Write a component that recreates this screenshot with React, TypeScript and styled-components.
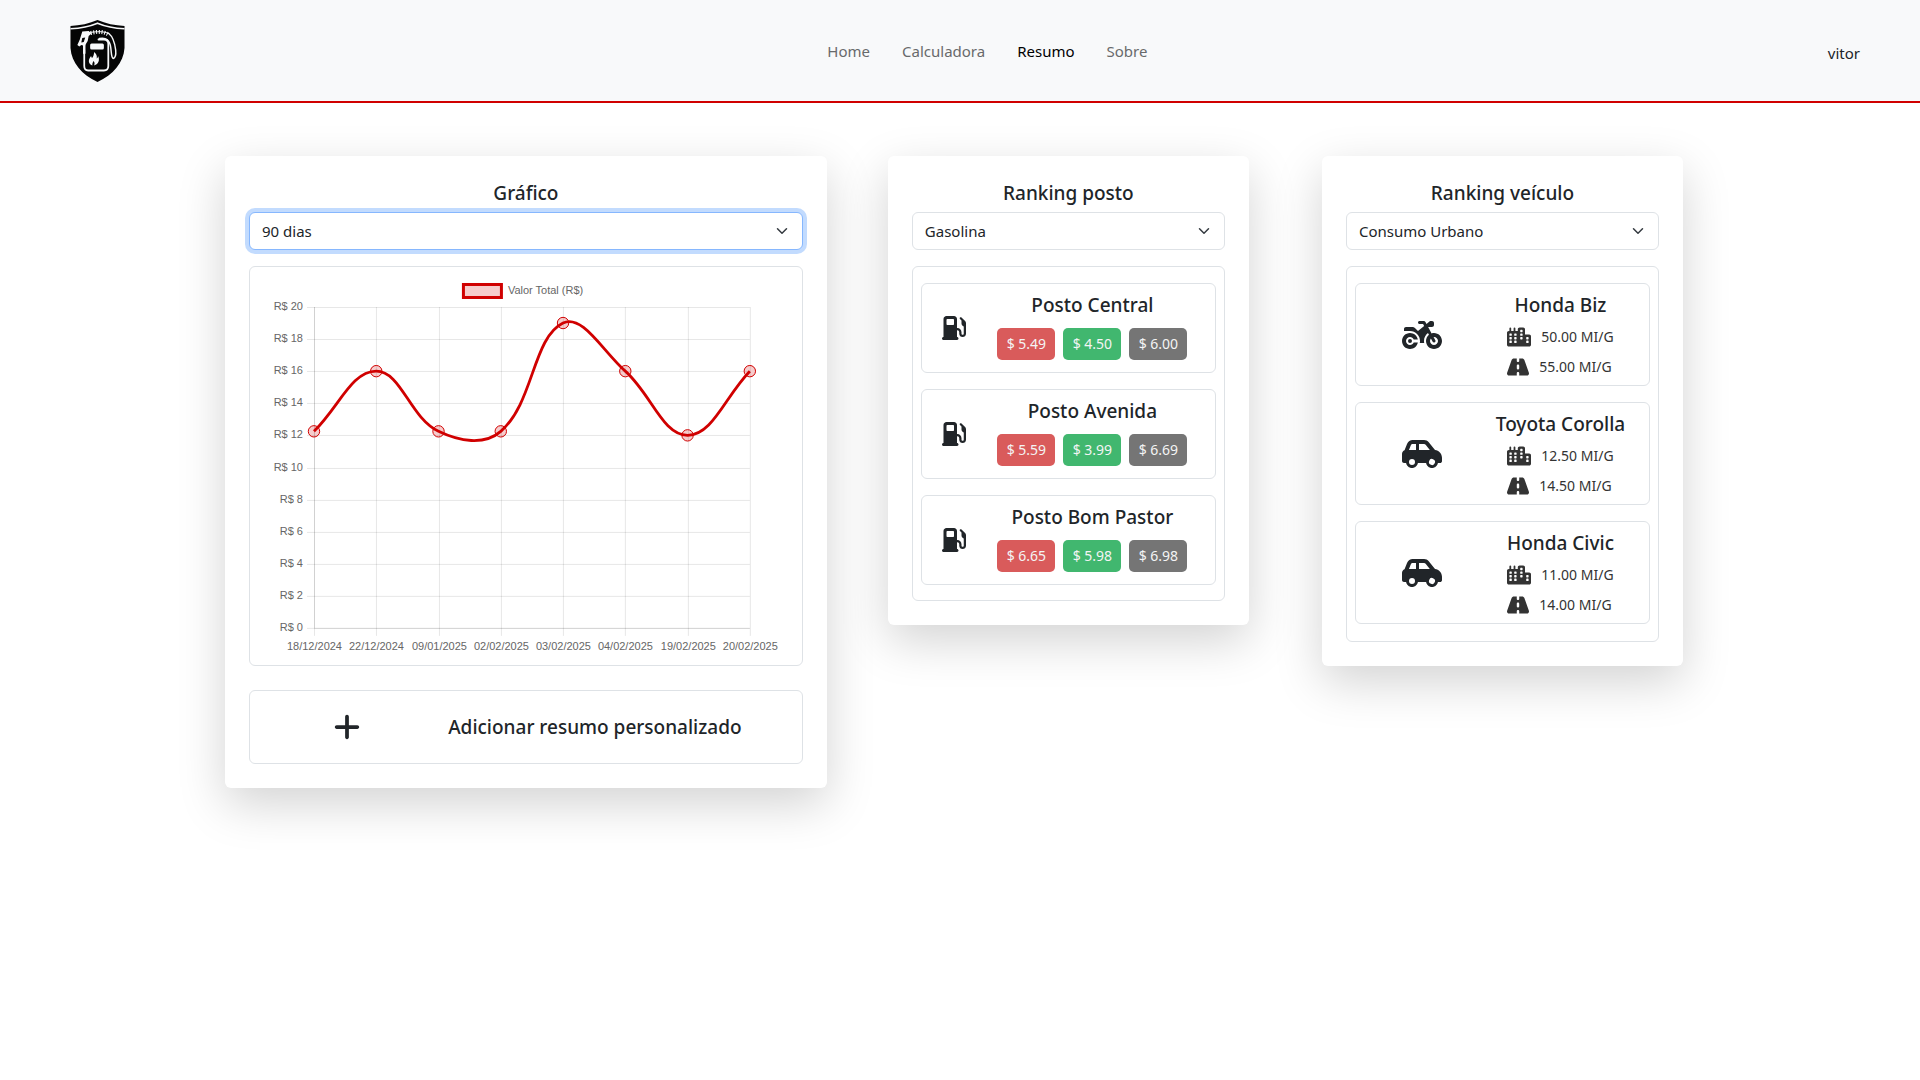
import React, { useState } from 'react';
import styled, { createGlobalStyle, css } from 'styled-components';
import { FaCarSide, FaCity, FaGasPump, FaMotorcycle, FaPlus, FaRoad } from 'react-icons/fa6';

const GlobalStyle = createGlobalStyle`
  *, *::before, *::after { box-sizing: border-box; }
  body {
    margin: 0;
    background: #fff;
    color: #212529;
    font-family: "Noto Sans", "Open Sans", sans-serif;
    font-size: 15px;
    line-height: 24px;
  }
`;

const Header = styled.header`
  display: flex;
  align-items: center;
  justify-content: space-between;
  height: 103px;
  padding: 0 60px 0 48px;
  background: #f8f9fa;
  border-bottom: 2px solid #d00000;
`;

const Brand = styled.a`
  display: flex;
  justify-content: center;
  width: 99px;
`;

const Nav = styled.nav`
  display: flex;
`;

const NavLink = styled.a<{ $active?: boolean }>`
  padding: 8px 16px;
  color: ${(p) => (p.$active ? '#000' : '#686a6b')};
  text-decoration: none;
`;

const UserLink = styled.a`
  padding-top: 4px;
  color: inherit;
  text-decoration: none;
`;

const Board = styled.main`
  display: grid;
  grid-template-columns: minmax(0, 5fr) 61px minmax(0, 3fr) 73px minmax(0, 3fr);
  align-items: start;
  padding: 53px 237px 80px 225px;
`;

const Card = styled.section<{ $column: number }>`
  grid-column: ${(p) => p.$column};
  padding: 24px;
  background: #fff;
  border-radius: 6px;
  box-shadow: 0 16px 48px rgba(0, 0, 0, 0.175);
`;

const heading = css`
  font-size: 19px;
  font-weight: 500;
  line-height: 26px;
  text-align: center;
`;

const CardTitle = styled.label`
  ${heading}
  display: block;
  margin-bottom: 6px;
`;

const SelectBox = styled.div`
  display: grid;
  align-items: center;
  margin-bottom: 16px;

  > * { grid-area: 1 / 1; }

  svg {
    justify-self: end;
    margin-right: 13px;
    pointer-events: none;
  }
`;

const Select = styled.select<{ $focused?: boolean }>`
  appearance: none;
  width: 100%;
  height: 38px;
  padding: 0 36px 0 12px;
  border: 1px solid ${(p) => (p.$focused ? '#86b7fe' : '#dee2e6')};
  border-radius: 6px;
  outline: 0;
  background: #fff;
  box-shadow: ${(p) => (p.$focused ? '0 0 0 4px rgba(13, 110, 253, 0.25)' : 'none')};
  color: #212529;
  font: inherit;
`;

const Panel = styled.div`
  border: 1px solid #dee2e6;
  border-radius: 6px;
`;

const Chart = styled.svg`
  display: block;
  width: 100%;
  font-family: "Liberation Sans", Arial, sans-serif;
  font-size: 11px;
  fill: #666;
`;

const AddButton = styled.button`
  ${heading}
  display: grid;
  grid-template-columns: 194fr 302fr;
  align-items: center;
  justify-items: center;
  width: 100%;
  height: 74px;
  margin-top: 24px;
  padding: 1px 56px 0 0;
  border: 1px solid #dee2e6;
  border-radius: 6px;
  background: #fff;
  color: inherit;
  font-family: inherit;
  cursor: pointer;
`;

const List = styled.ul<{ $bottom: number }>`
  display: flex;
  flex-direction: column;
  gap: 16px;
  margin: 0;
  padding: 16px 8px ${(p) => p.$bottom}px;
  border: 1px solid #dee2e6;
  border-radius: 6px;
  list-style: none;
`;

const Item = styled.li<{ $columns: string; $height: number }>`
  display: grid;
  grid-template-columns: ${(p) => p.$columns};
  align-items: center;
  justify-items: center;
  min-height: ${(p) => p.$height}px;
  padding-right: 16px;
  border: 1px solid #dee2e6;
  border-radius: 6px;
`;

const ItemIcon = styled.span<{ $width: number; $height: number }>`
  display: flex;
  flex: none;

  svg {
    flex: none;
    width: ${(p) => p.$width}px;
    height: ${(p) => p.$height}px;
  }
`;

const Details = styled.div`
  display: flex;
  flex-direction: column;
  align-items: center;
  align-self: start;
  padding-top: 8px;
`;

const ItemTitle = styled.h2`
  ${heading}
  margin: 0;
  white-space: nowrap;
`;

const Prices = styled.div`
  display: flex;
  gap: 8px;
  margin-top: 10px;
`;

const Price = styled.span<{ $color: string }>`
  min-width: 58px;
  border-radius: 5px;
  background: ${(p) => p.$color};
  color: #f4f4f4;
  font-size: 14px;
  line-height: 32px;
  text-align: center;
`;

const Stats = styled.div`
  display: flex;
  flex-direction: column;
  gap: 5px;
  margin-top: 6px;
`;

const Stat = styled.span`
  display: flex;
  align-items: center;
  gap: 10px;
  color: #333;
  font-size: 14px;
  line-height: 25px;
  white-space: nowrap;
`;

function Logo() {
  return (
    <svg width="55" height="62" viewBox="0 0 56 62" preserveAspectRatio="none" role="img" aria-label="Logo">
      <path d="M.5 6C10 5.500 20 3.500 28 0c8 3.500 18 5.500 27.500 6v22C54.500 43 44 54.500 28 62 12 54.500 1.500 43 .5 28Z" fill="#050505" />
      <path d="M.5 8.800C11 8.300 20 6.500 28 3.200c8 3.300 17 5.100 27.500 5.600" fill="none" stroke="#f8f9fa" strokeWidth="1.600" />
      <g fill="none" stroke="#f8f9fa" strokeLinecap="round">
        <path d="M14.500 30v16c0 3 1.500 4.500 4 4.500h16c3 0 4.500-1.500 4.500-4.500V24c0-3-1.500-4.500-4.500-4.500H29" strokeWidth="1.800" />
        <path d="M14.500 33v-8" strokeWidth="2.500" />
        <path d="M30 18.500c7-1.500 10.500 2 11.500 9 .8 6 .5 10.500 2.500 11 2-.5 3-3.500 2.500-8.500C45.500 22 44 17 39.500 13.500" strokeWidth="1.500" />
        <path d="M21 13c6-1.500 13-2 19 2" strokeWidth="4" strokeDasharray="1.100 1.700" strokeLinecap="butt" />
        <path d="M20 12.500c7-1 14-1.500 19.500 1" strokeWidth="1" />
      </g>
      <path d="M12.500 11.500 19 11l3 2.500-3 2.500-1 5-3 5-3.500-1-2 1.500-2-1.500 2.500-5.500Z" fill="#f8f9fa" />
      <path d="m12.500 18 3-.5-1.500 4.500-2.500.5Z" fill="#050505" />
      <rect x="20.500" y="23.500" width="14" height="6" rx="1.500" fill="#f8f9fa" />
      <path d="M24.500 32c2.500 2 3.200 4 2.700 6.500 1-.4 1.300-1.300 1.300-2.500 2 3.500 1 8-4 9.500.8-1.600.7-3-.5-4.500-.8 1.600-1.500 2.400-1.200 4.500-4.800-2-4.300-6-1.300-9.500.2 1 .4 1.600 1 2 1.400-1.700 2-3.500 2-6Z" fill="#f8f9fa" />
    </svg>
  );
}

function Chevron() {
  return (
    <svg width="16" height="12" viewBox="0 0 16 16" aria-hidden="true">
      <path d="m2 5 6 6 6-6" fill="none" stroke="#343a40" strokeWidth="2" strokeLinecap="round" strokeLinejoin="round" />
    </svg>
  );
}

interface PickerProps {
  id: string;
  title: string;
  options: string[];
  focused?: boolean;
}

function Picker({ id, title, options, focused }: PickerProps) {
  const [value, setValue] = useState(options[0]);
  return (
    <>
      <CardTitle htmlFor={id}>{title}</CardTitle>
      <SelectBox>
        <Select id={id} $focused={focused} value={value} onChange={(e) => setValue(e.target.value)}>
          {options.map((o) => (
            <option key={o}>{o}</option>
          ))}
        </Select>
        <Chevron />
      </SelectBox>
    </>
  );
}

const spending = [
  { date: '18/12/2024', total: 12.25 },
  { date: '22/12/2024', total: 16 },
  { date: '09/01/2025', total: 12.25 },
  { date: '02/02/2025', total: 12.25 },
  { date: '03/02/2025', total: 19 },
  { date: '04/02/2025', total: 16 },
  { date: '19/02/2025', total: 12 },
  { date: '20/02/2025', total: 16 },
];

const plot = { left: 64, right: 500, top: 40, bottom: 361, max: 20 };
const tension = 0.4;

const points = spending.map((s, i) => ({
  x: plot.left + (i * (plot.right - plot.left)) / (spending.length - 1),
  y: plot.bottom - (s.total / plot.max) * (plot.bottom - plot.top),
}));

// Smooth curve: each point's handles follow the line between its neighbours.
function curvePath() {
  const handles = points.map((p, i) => {
    const prev = points[Math.max(0, i - 1)];
    const next = points[Math.min(points.length - 1, i + 1)];
    const before = Math.hypot(p.x - prev.x, p.y - prev.y);
    const after = Math.hypot(next.x - p.x, next.y - p.y);
    const a = (tension * before) / (before + after);
    const b = (tension * after) / (before + after);
    return {
      inX: p.x - a * (next.x - prev.x),
      inY: p.y - a * (next.y - prev.y),
      outX: p.x + b * (next.x - prev.x),
      outY: p.y + b * (next.y - prev.y),
    };
  });
  return points
    .map((p, i) =>
      i === 0
        ? `M${p.x} ${p.y}`
        : `C${handles[i - 1].outX} ${handles[i - 1].outY} ${handles[i].inX} ${handles[i].inY} ${p.x} ${p.y}`
    )
    .join('');
}

function SpendingChart() {
  const ticks = Array.from({ length: 11 }, (_, i) => i * 2);
  return (
    <Chart viewBox="0 0 552 398" role="img" aria-label="Valor Total (R$)">
      <rect x="213.500" y="17.500" width="38" height="13" fill="rgba(208,0,0,.2)" stroke="#d00000" strokeWidth="3" />
      <text x="258" y="27">Valor Total (R$)</text>
      {ticks.map((t) => {
        const y = Math.round(plot.bottom - (t / plot.max) * (plot.bottom - plot.top)) + 0.5;
        return (
          <g key={t}>
            <path d={`M${plot.left - 7} ${y}H${plot.right}`} stroke="rgba(0,0,0,.1)" />
            <text x={plot.left - 11} y={y + 2.5} textAnchor="end">{`R$ ${t}`}</text>
          </g>
        );
      })}
      {points.map((p, i) => {
        const x = Math.round(p.x) + 0.5;
        return (
          <g key={spending[i].date}>
            <path d={`M${x} ${plot.top}V${plot.bottom + 8}`} stroke="rgba(0,0,0,.1)" />
            <text x={x} y={plot.bottom + 22} textAnchor="middle">{spending[i].date}</text>
          </g>
        );
      })}
      <path d={`M${plot.left + 0.5} ${plot.top}V${plot.bottom + 0.5}H${plot.right}`} fill="none" stroke="rgba(0,0,0,.1)" />
      <path d={curvePath()} fill="none" stroke="#d00000" strokeWidth="2.800" />
      {points.map((p) => (
        <circle key={p.x} cx={p.x} cy={p.y} r="5.700" fill="rgba(208,0,0,.2)" stroke="#d00000" />
      ))}
    </Chart>
  );
}

const stations = [
  { name: 'Posto Central', prices: ['5.49', '4.50', '6.00'] },
  { name: 'Posto Avenida', prices: ['5.59', '3.99', '6.69'] },
  { name: 'Posto Bom Pastor', prices: ['6.65', '5.98', '6.98'] },
];

const priceColors = ['#d95b5b', '#41b76f', '#757575'];

const vehicles = [
  { name: 'Honda Biz', Icon: FaMotorcycle, city: '50.00', road: '55.00' },
  { name: 'Toyota Corolla', Icon: FaCarSide, city: '12.50', road: '14.50' },
  { name: 'Honda Civic', Icon: FaCarSide, city: '11.00', road: '14.00' },
];

export default function App() {
  return (
    <>
      <GlobalStyle />
      <Header>
        <Brand href="#home"><Logo /></Brand>
        <Nav>
          <NavLink href="#home">Home</NavLink>
          <NavLink href="#calculadora">Calculadora</NavLink>
          <NavLink href="#resumo" $active>Resumo</NavLink>
          <NavLink href="#sobre">Sobre</NavLink>
        </Nav>
        <UserLink href="#perfil">vitor</UserLink>
      </Header>
      <Board>
        <Card $column={1}>
          <Picker id="periodo" title="Gráfico" options={['90 dias']} focused />
          <Panel><SpendingChart /></Panel>
          <AddButton type="button">
            <FaPlus size={30} />
            <span>Adicionar resumo personalizado</span>
          </AddButton>
        </Card>
        <Card $column={3}>
          <Picker id="combustivel" title="Ranking posto" options={['Gasolina']} />
          <List $bottom={15}>
            {stations.map((s) => (
              <Item key={s.name} $columns="64px 1fr" $height={90}>
                <ItemIcon $width={24} $height={24}><FaGasPump /></ItemIcon>
                <Details>
                  <ItemTitle>{s.name}</ItemTitle>
                  <Prices>
                    {s.prices.map((price, i) => (
                      <Price key={i} $color={priceColors[i]}>{`$ ${price}`}</Price>
                    ))}
                  </Prices>
                </Details>
              </Item>
            ))}
          </List>
        </Card>
        <Card $column={5}>
          <Picker id="consumo" title="Ranking veículo" options={['Consumo Urbano']} />
          <List $bottom={17}>
            {vehicles.map(({ name, Icon, city, road }) => (
              <Item key={name} $columns="132fr 145fr" $height={103}>
                <ItemIcon $width={40} $height={32}><Icon /></ItemIcon>
                <Details>
                  <ItemTitle>{name}</ItemTitle>
                  <Stats>
                    <Stat><ItemIcon $width={24} $height={20}><FaCity /></ItemIcon>{`${city} MI/G`}</Stat>
                    <Stat><ItemIcon $width={22} $height={20}><FaRoad /></ItemIcon>{`${road} MI/G`}</Stat>
                  </Stats>
                </Details>
              </Item>
            ))}
          </List>
        </Card>
      </Board>
    </>
  );
}
